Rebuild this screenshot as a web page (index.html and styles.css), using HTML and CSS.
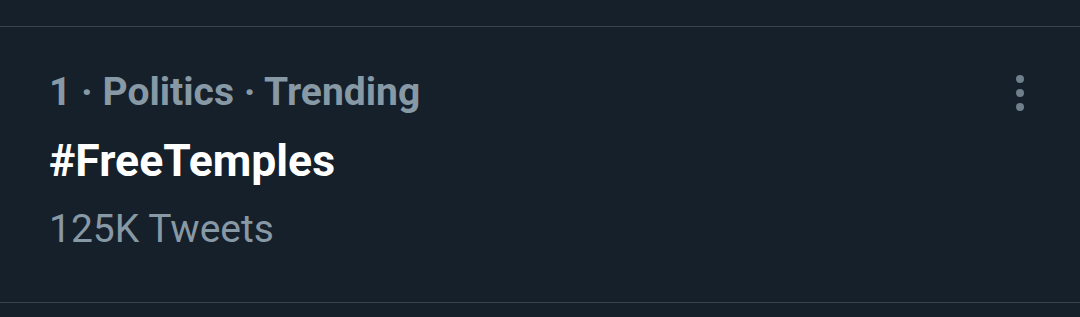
FILE: index.html
```html
<!DOCTYPE html>
<html lang="en">
<head>
    <meta charset="UTF-8">
    <meta name="viewport" content="width=device-width, initial-scale=1.0">
    <title>Trends</title>
    <link rel="stylesheet" href="styles.css">
</head>
<body>
    <div class="top-gap"></div>
    <div class="trend">
        <div class="trend-info">
            <p class="trend-meta">1 · Politics · Trending</p>
            <p class="trend-name">#FreeTemples</p>
            <p class="trend-count">125K Tweets</p>
        </div>
        <svg class="more" width="8" height="36" viewBox="0 0 8 36">
            <circle cx="4" cy="4" r="4"/>
            <circle cx="4" cy="18" r="4"/>
            <circle cx="4" cy="32" r="4"/>
        </svg>
    </div>
</body>
</html>
```

FILE: styles.css
```css
body {
    margin: 0;
    background-color: #15202b;
    font-family: Roboto, "Noto Sans", sans-serif;
    overflow: hidden;
}
.top-gap {
    height: 26px;
    border-bottom: 1px solid #38444d;
}
.trend {
    display: flex;
    justify-content: space-between;
    align-items: flex-start;
    padding: 41px 56px 49px 49px;
    border-bottom: 1px solid #38444d;
}
.trend p {
    margin: 0;
}
.trend-meta {
    font-size: 39px;
    line-height: 48px;
    font-weight: bold;
    color: #8899a6;
}
.trend-name {
    font-size: 44.5px;
    line-height: 52px;
    font-weight: bold;
    color: #ffffff;
    margin-top: 19px !important;
}
.trend-count {
    font-size: 39px;
    line-height: 48px;
    color: #8899a6;
    margin-top: 18px !important;
}
.more {
    fill: #6f7f8c;
    margin-top: 7px;
}
```
